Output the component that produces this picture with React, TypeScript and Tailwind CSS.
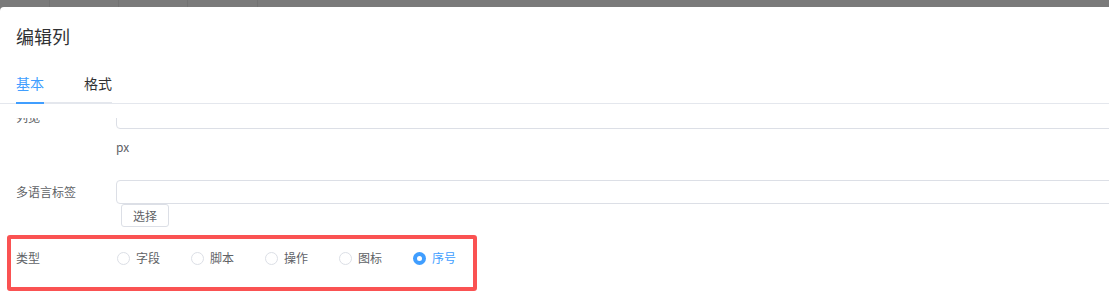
import React from "react";

const font = { fontFamily: '"Noto Sans CJK SC", "Noto Sans", sans-serif' };

function Radio({ label, checked }: { label: string; checked?: boolean }) {
  return (
    <div className="flex items-center w-[74px] shrink-0">
      {checked ? (
        <span className="w-[13px] h-[13px] rounded-full bg-[#409eff] flex items-center justify-center shrink-0">
          <span className="w-[5px] h-[5px] rounded-full bg-white" />
        </span>
      ) : (
        <span className="w-[13px] h-[13px] rounded-full border border-[#dcdfe6] bg-white shrink-0" />
      )}
      <span className={`ml-[6px] text-[12px] leading-[16px] ${checked ? "text-[#409eff]" : "text-[#606266]"}`}>{label}</span>
    </div>
  );
}

export default function App() {
  return (
    <div className="w-[1109px] h-[295px] bg-[#7a7a7a] overflow-hidden relative" style={font}>
      <div className="h-[7px] flex">
        <div className="w-[50px] border-r border-[#727272]" />
        <div className="w-[69px] border-r border-[#727272]" />
        <div className="w-[69px] border-r border-[#727272]" />
        <div className="w-[70px] border-r border-[#727272]" />
      </div>
      <div className="bg-white h-[288px] rounded-tl-[4px] flex flex-col">
        <div className="pt-[17px] pl-4 h-[24px] box-content text-[18px] leading-[24px] text-[#303133]">编辑列</div>
        <div className="mt-[16px] relative h-[40px]">
          <div className="absolute left-0 right-0 bottom-[0px] h-[1px] bg-[#e4e7ed]" />
          <div className="ml-4 w-[96px] h-[40px] relative flex border-b-2 border-[#e4e7ed] box-border">
            <div className="w-[48px] text-[14px] leading-[38px] text-[#409eff]">基本</div>
            <div className="pl-[20px] text-[14px] leading-[38px] text-[#303133]">格式</div>
            <div className="absolute left-0 bottom-[-2px] w-[28px] h-[2px] bg-[#409eff]" />
          </div>
        </div>
        <div className="mt-[14px] flex-1 overflow-hidden">
          <div className="mt-[-13px]">
            <div className="flex items-center h-[24px]">
              <div className="w-[116px] shrink-0 pl-4 text-[12px] text-[#606266]">列宽</div>
              <div className="flex-1 h-[24px] border border-[#dcdfe6] rounded-[4px] mr-[-6px]" />
            </div>
            <div className="pl-[116px] pt-[9px] h-[51px] text-[12px] leading-[18px] text-[#606266]">px</div>
            <div className="flex items-center h-[24px]">
              <div className="w-[116px] shrink-0 pl-4 text-[12px] text-[#606266]">多语言标签</div>
              <div className="flex-1 h-[24px] border border-[#dcdfe6] rounded-[4px] mr-[-6px]" />
            </div>
            <div className="pl-[121px]">
              <div className="w-[48px] h-[23px] border border-[#dcdfe6] rounded-[3px] flex items-center justify-center text-[12px] text-[#606266]">选择</div>
            </div>
            <div className="ml-[7px] mt-[8px] w-[470px] h-[56px] border-4 border-[#fa5252] rounded-[3px] flex items-center pl-[5px] pb-[10px]">
              <div className="w-[100px] shrink-0 text-[12px] text-[#606266]">类型</div>
              <div className="flex items-center ml-[1px] shrink-0">
                <Radio label="字段" />
                <Radio label="脚本" />
                <Radio label="操作" />
                <Radio label="图标" />
                <Radio label="序号" checked />
              </div>
            </div>
          </div>
        </div>
      </div>
    </div>
  );
}
